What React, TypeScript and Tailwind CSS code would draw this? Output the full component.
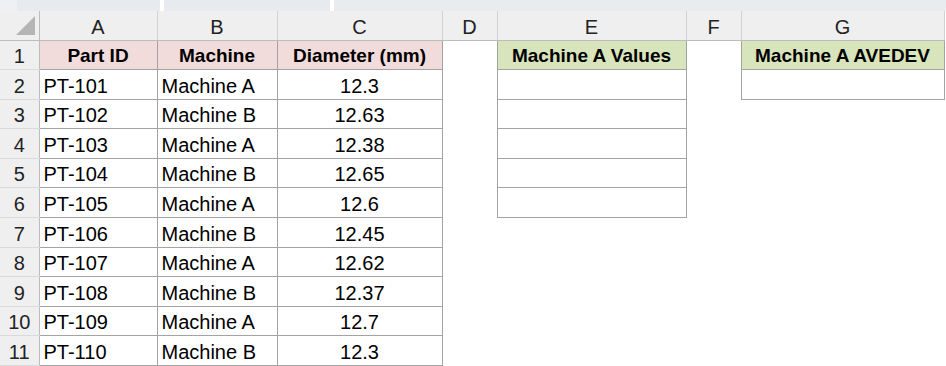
import React from "react";

const rows = [
  ["PT-101", "Machine A", "12.3"],
  ["PT-102", "Machine B", "12.63"],
  ["PT-103", "Machine A", "12.38"],
  ["PT-104", "Machine B", "12.65"],
  ["PT-105", "Machine A", "12.6"],
  ["PT-106", "Machine B", "12.45"],
  ["PT-107", "Machine A", "12.62"],
  ["PT-108", "Machine B", "12.37"],
  ["PT-109", "Machine A", "12.7"],
  ["PT-110", "Machine B", "12.3"],
];

const cols = ["A", "B", "C", "D", "E", "F", "G"];
const widths = [118, 120, 165, 55, 189, 55, 203];

const cell = "border border-[#a3a3a3] px-[4px] pt-[3px] leading-[22px] align-bottom pb-[2px]";
const head = `${cell} text-center text-[19px] font-bold`;
const rowHead =
  "border-r border-r-[#bcbcbc] border-b border-b-[#dadada] bg-[#efefef] text-center align-bottom pb-[2px] leading-[22px] text-[#222]";

export default function App() {
  return (
    <div
      className="h-[366px] w-[946px] overflow-hidden bg-white text-[20px] text-black"
      style={{ fontFamily: '"Liberation Sans", Arial, sans-serif' }}
    >
      {/* formula bar remnant */}
      <div className="flex h-[11px] bg-[#e7eaee]">
        <div className="w-[17px] bg-[#eef0f3]" />
        <div className="w-[143px]" />
        <div className="w-[4px] bg-white" />
        <div className="w-[166px]" />
        <div className="w-[4px] bg-white" />
        <div className="flex-1 bg-[#e9ecef]" />
      </div>

      <table className="table-fixed border-collapse">
        <colgroup>
          <col className="w-[39px]" />
          {widths.map((w, i) => (
            <col key={i} style={{ width: w }} />
          ))}
        </colgroup>
        <thead>
          <tr className="h-[29px]">
            <th className="relative border-r border-r-[#bcbcbc] border-b border-b-[#bcbcbc] bg-[#efefef] p-0">
              <svg className="absolute left-[16px] top-[5px]" width="19" height="19" viewBox="0 0 19 19">
                <polygon points="19,0 19,19 0,19" fill="#b5b5b5" />
              </svg>
            </th>
            {cols.map((c) => (
              <th
                key={c}
                className="border-r border-r-[#d2d2d2] border-b border-b-[#bcbcbc] bg-[#efefef] text-center align-bottom pb-[2px] font-normal leading-[22px] text-[#222]"
              >
                {c}
              </th>
            ))}
          </tr>
        </thead>
        <tbody>
          <tr className="h-[29.6px]">
            <td className={rowHead}>1</td>
            <td className={`${head} bg-[#f2dcdb]`}>Part ID</td>
            <td className={`${head} bg-[#f2dcdb]`}>Machine</td>
            <td className={`${head} bg-[#f2dcdb]`}>Diameter (mm)</td>
            <td />
            <td className={`${head} bg-[#d8e4bc]`}>Machine A Values</td>
            <td />
            <td className={`${head} bg-[#d8e4bc]`}>Machine A AVEDEV</td>
          </tr>
          {rows.map((r, i) => (
            <tr key={i} className="h-[29.6px]">
              <td className={rowHead}>{i + 2}</td>
              <td className={cell}>{r[0]}</td>
              <td className={cell}>{r[1]}</td>
              <td className={`${cell} text-center`}>{r[2]}</td>
              <td />
              {i < 5 ? <td className={cell} /> : <td />}
              <td />
              {i === 0 ? <td className={cell} /> : <td />}
            </tr>
          ))}
        </tbody>
      </table>
    </div>
  );
}
